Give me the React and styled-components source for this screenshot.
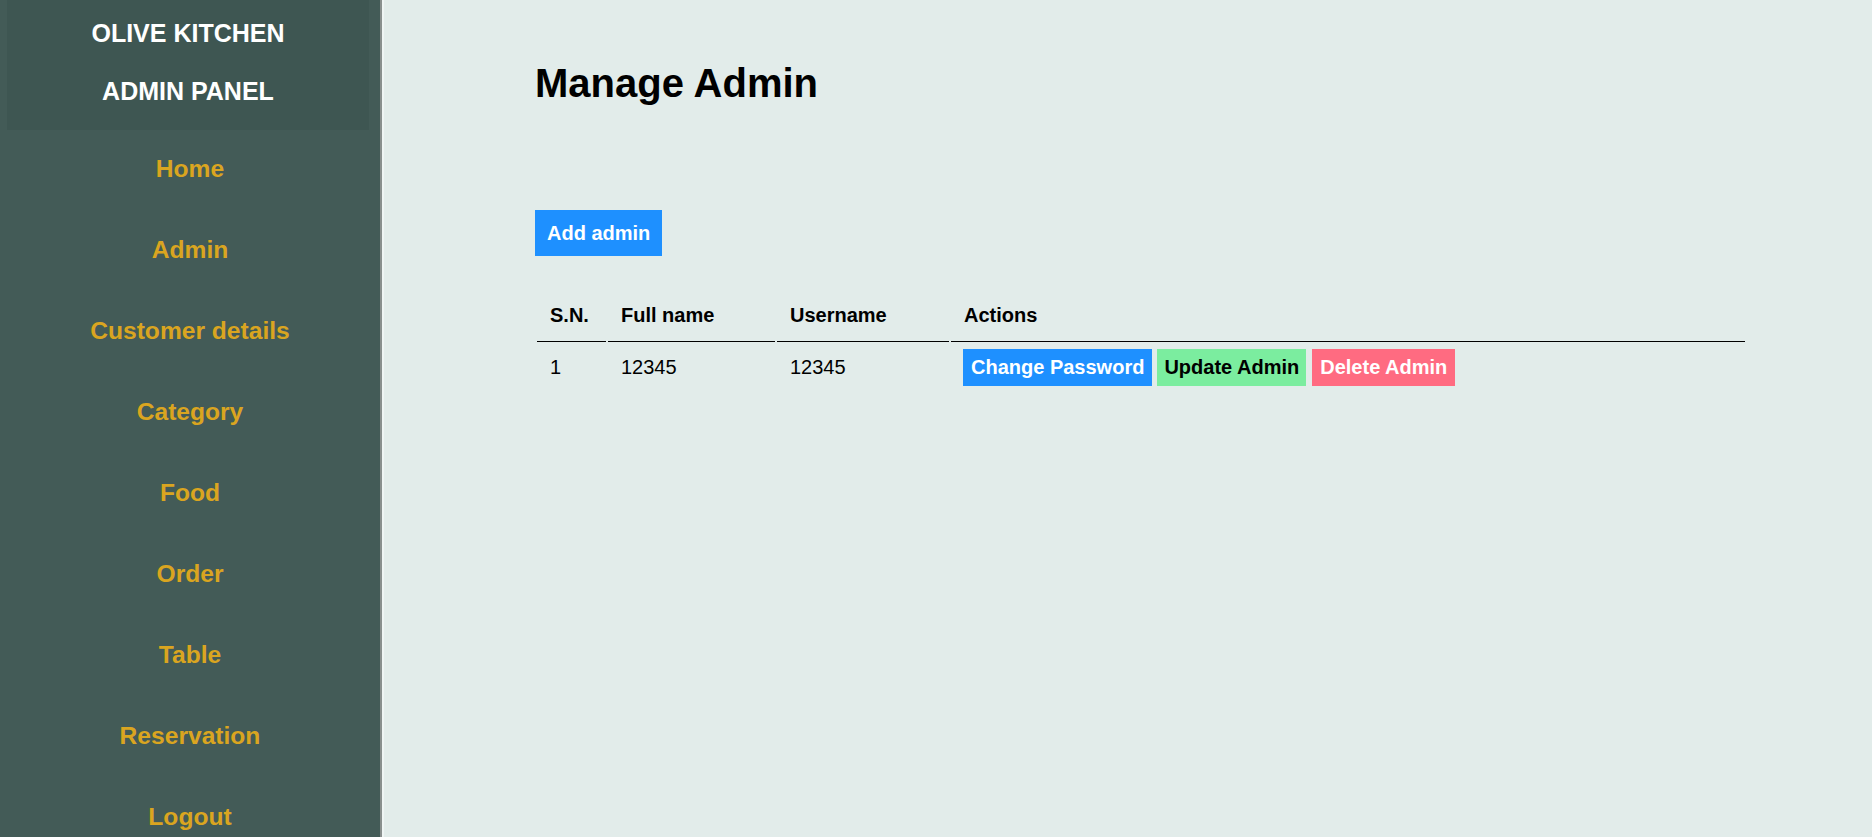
import React from 'react'
import styled, { createGlobalStyle, css } from 'styled-components'

const GlobalStyle = createGlobalStyle`
    html, body {
        margin: 0;
        padding: 0;
        height: 100%;
    }
    body {
        font-family: "Liberation Sans", Arial, sans-serif;
        font-size: 20px;
        background-color: #e2ecea;
    }
`

const Page = styled.div`
    display: flex;
    min-height: 837px;
`

const Sidebar = styled.aside`
    width: 380px;
    flex-shrink: 0;
    background-color: #435b57;
    border-right: 2px solid #888f8d;
`

const Brand = styled.div`
    margin: 0 11px 0 7px;
    padding: 4px 0 10px;
    background-color: #3e5652;
    color: #ffffff;
    text-align: center;
`

const BrandLine = styled.div`
    font-size: 25px;
    font-weight: bold;
    line-height: 58px;
`

const Nav = styled.nav`
    display: flex;
    flex-direction: column;
    margin-top: -2px;
`

const NavLink = styled.a`
    height: 81px;
    display: flex;
    align-items: center;
    justify-content: center;
    color: #daa520;
    font-size: 24.6px;
    font-weight: bold;
    text-decoration: none;
`

const Main = styled.main`
    flex-grow: 1;
    border-left: 2px solid #eef4f3;
    padding: 60px 0 0 151px;
`

const Title = styled.h1`
    margin: 0;
    font-size: 40px;
    line-height: 46px;
`

const AddButton = styled.button`
    margin-top: 104px;
    padding: 12px 12px;
    border: none;
    background-color: #1e90ff;
    color: #ffffff;
    font-family: inherit;
    font-size: 20px;
    font-weight: bold;
    line-height: 22px;
`

const Table = styled.table`
    margin-top: 38px;
    width: 1212px;
    border-spacing: 2px;
`

const Th = styled.th`
    width: ${p => p.w ? p.w + 'px' : 'auto'};
    padding: 8px 13px 14px;
    text-align: left;
    font-size: 20px;
    line-height: 23px;
    border-bottom: 1px solid #000000;
`

const Td = styled.td`
    padding: 5px 13px;
    font-size: 20px;
    line-height: 23px;
    vertical-align: middle;
    ${p => p.actions && css`
        padding-left: 12px;
        font-size: 0;
    `}
`

const ActionButton = styled.button`
    margin-right: 5px;
    padding: 7px 8px;
    border: none;
    font-family: "Liberation Sans", Arial, sans-serif;
    font-size: 20px;
    font-weight: bold;
    line-height: 23px;
    color: #ffffff;
    background-color: #1e90ff;
    ${p => p.update && css`
        background-color: #7bed9f;
        color: #000000;
        padding: 7px 7px;
        margin-right: 6px;
    `}
    ${p => p.remove && css`
        background-color: #ff6b81;
        padding: 7px 8px;
    `}
`

const links = ['Home', 'Admin', 'Customer details', 'Category', 'Food', 'Order', 'Table', 'Reservation', 'Logout']

const App = () => {
    return (
        <Page>
            <GlobalStyle />
            <Sidebar>
                <Brand>
                    <BrandLine>OLIVE KITCHEN</BrandLine>
                    <BrandLine>ADMIN PANEL</BrandLine>
                </Brand>
                <Nav>
                    {links.map(l => <NavLink key={l} href="#">{l}</NavLink>)}
                </Nav>
            </Sidebar>
            <Main>
                <Title>Manage Admin</Title>
                <AddButton>Add admin</AddButton>
                <Table>
                    <thead>
                        <tr>
                            <Th w={43}>S.N.</Th>
                            <Th w={141}>Full name</Th>
                            <Th w={146}>Username</Th>
                            <Th>Actions</Th>
                        </tr>
                    </thead>
                    <tbody>
                        <tr>
                            <Td>1</Td>
                            <Td>12345</Td>
                            <Td>12345</Td>
                            <Td actions>
                                <ActionButton>Change Password</ActionButton>
                                <ActionButton update>Update Admin</ActionButton>
                                <ActionButton remove>Delete Admin</ActionButton>
                            </Td>
                        </tr>
                    </tbody>
                </Table>
            </Main>
        </Page>
    )
}

export default App
